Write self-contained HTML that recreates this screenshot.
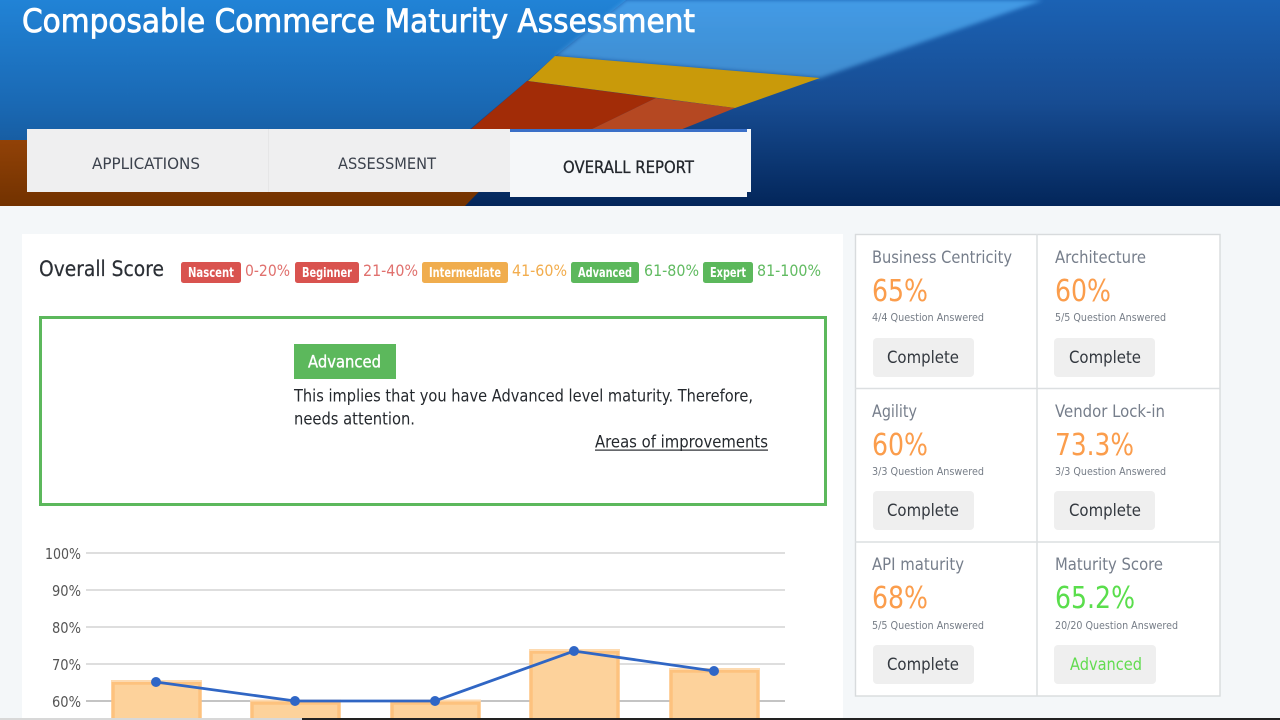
<!DOCTYPE html>
<html lang="en"><head><meta charset="utf-8"><title>Composable Commerce Maturity Assessment</title>
<style>
html,body{margin:0;padding:0;width:1280px;height:720px;overflow:hidden;background:#f4f7f9}
svg{display:block;filter:blur(.35px)}
text{font-family:"DejaVu Sans","Liberation Sans",sans-serif}
</style></head><body>
<svg xmlns="http://www.w3.org/2000/svg" width="1280" height="720" viewBox="0 0 1280 720">
<defs>
<linearGradient id="bgL" x1="0" y1="0" x2="0" y2="1"><stop offset="0" stop-color="#2183d6"/><stop offset=".5" stop-color="#1a69b4"/><stop offset="1" stop-color="#124a86"/></linearGradient>
<linearGradient id="bgR" x1="0" y1="0" x2="0" y2="1"><stop offset="0" stop-color="#1b62b4"/><stop offset=".5" stop-color="#174c92"/><stop offset="1" stop-color="#03265a"/></linearGradient>
<linearGradient id="lb" x1="0" y1="0" x2="0" y2="1"><stop offset="0" stop-color="#439be6"/><stop offset="1" stop-color="#3f8ccf"/></linearGradient>
<linearGradient id="br" x1="0" y1="0" x2="0" y2="1"><stop offset="0" stop-color="#964408"/><stop offset="1" stop-color="#723200"/></linearGradient>
<filter id="soft" x="-5%" y="-5%" width="110%" height="110%"><feGaussianBlur stdDeviation="2"/></filter>
</defs>
<rect width="1280" height="720" fill="#f4f7f9"/>
<rect x="0" y="0" width="1280" height="206" fill="url(#bgR)"/>
<polygon points="0,0 626,0 555,56 528,80 470,129 465,206 0,206" fill="url(#bgL)"/>
<polygon points="626,0 1043,0 820,78 555,56" fill="url(#lb)" filter="url(#soft)"/>
<polygon points="555,56 820,78 735,108 528,81" fill="#c99a0a"/>
<polygon points="527,81 656,98 590,130 470,130" fill="#a22c07"/>
<polygon points="656,98 735,108 680,130 590,130" fill="#b54822"/>
<polygon points="0,140 60,140 60,130 510,160 465,206 0,206" fill="url(#br)"/>
<text x="22" y="32" font-size="32" fill="#fff" stroke="#fff" stroke-width=".8" textLength="673" lengthAdjust="spacingAndGlyphs">Composable Commerce Maturity Assessment</text>

<rect x="27" y="129" width="483" height="63" fill="#efeff0"/>
<rect x="268" y="129" width="1" height="63" fill="#e6e6e7"/>
<rect x="510" y="129" width="241" height="63" fill="#f5f7f9"/>
<rect x="510" y="129" width="237" height="68" fill="#f5f7f9"/>
<rect x="510" y="129" width="237" height="3" fill="#3b70c8"/>
<text x="92" y="169" font-size="16" fill="#3c424d" textLength="108" lengthAdjust="spacingAndGlyphs">APPLICATIONS</text>
<text x="338" y="169" font-size="16" fill="#3c424d" textLength="98" lengthAdjust="spacingAndGlyphs">ASSESSMENT</text>
<text x="563" y="173" font-size="17" fill="#22262c" stroke="#22262c" stroke-width=".3" textLength="131" lengthAdjust="spacingAndGlyphs">OVERALL REPORT</text>

<rect x="22" y="234" width="821" height="486" fill="#fff"/>
<text x="39" y="276" font-size="21" fill="#2b2f35" stroke="#2b2f35" stroke-width=".2" textLength="125" lengthAdjust="spacingAndGlyphs">Overall Score</text>

<rect x="181" y="262" width="60" height="21" rx="2.5" fill="#d9534f"/>
<text x="188" y="277" font-size="13" font-weight="700" fill="#fff" textLength="46" lengthAdjust="spacingAndGlyphs">Nascent</text>
<text x="245" y="276" font-size="16" fill="#e0716e" textLength="45" lengthAdjust="spacingAndGlyphs">0-20%</text>
<rect x="295" y="262" width="64" height="21" rx="2.5" fill="#d9534f"/>
<text x="302" y="277" font-size="13" font-weight="700" fill="#fff" textLength="50" lengthAdjust="spacingAndGlyphs">Beginner</text>
<text x="363" y="276" font-size="16" fill="#e0716e" textLength="55" lengthAdjust="spacingAndGlyphs">21-40%</text>
<rect x="422" y="262" width="86" height="21" rx="2.5" fill="#f0ad4e"/>
<text x="429" y="277" font-size="13" font-weight="700" fill="#fff" textLength="72" lengthAdjust="spacingAndGlyphs">Intermediate</text>
<text x="512" y="276" font-size="16" fill="#f2ad4e" textLength="55" lengthAdjust="spacingAndGlyphs">41-60%</text>
<rect x="571" y="262" width="68" height="21" rx="2.5" fill="#5cb85c"/>
<text x="578" y="277" font-size="13" font-weight="700" fill="#fff" textLength="54" lengthAdjust="spacingAndGlyphs">Advanced</text>
<text x="644" y="276" font-size="16" fill="#62bb62" textLength="55" lengthAdjust="spacingAndGlyphs">61-80%</text>
<rect x="703" y="262" width="50" height="21" rx="2.5" fill="#5cb85c"/>
<text x="710" y="277" font-size="13" font-weight="700" fill="#fff" textLength="36" lengthAdjust="spacingAndGlyphs">Expert</text>
<text x="757" y="276" font-size="16" fill="#62bb62" textLength="64" lengthAdjust="spacingAndGlyphs">81-100%</text>

<rect x="40.5" y="317.5" width="785" height="187" fill="#fff" stroke="#5cb85c" stroke-width="3"/>
<rect x="294" y="344" width="102" height="35" fill="#5cb85c"/>
<text x="308" y="367.500" font-size="17" fill="#fff" stroke="#fff" stroke-width=".35" textLength="73" lengthAdjust="spacingAndGlyphs">Advanced</text>
<text x="294" y="401.500" font-size="16.500" fill="#24282d" textLength="459" lengthAdjust="spacingAndGlyphs">This implies that you have Advanced level maturity. Therefore,</text>
<text x="294" y="424.500" font-size="16.500" fill="#24282d" textLength="121" lengthAdjust="spacingAndGlyphs">needs attention.</text>
<text x="595" y="447.500" font-size="16.500" fill="#24282d" textLength="173" lengthAdjust="spacingAndGlyphs">Areas of improvements</text>
<rect x="595" y="449.500" width="173" height="1.200" fill="#24282d"/>

<g fill="none" stroke="#cbcbcb" stroke-width="1.2">
<path d="M86 553H785M86 590H785M86 627H785M86 664H785"/>
<path d="M86 701H785" stroke-width="2" stroke="#c4c4c4"/>
</g>
<g font-size="15.500" fill="#555">
<text x="45" y="559" textLength="36" lengthAdjust="spacingAndGlyphs">100%</text>
<text x="52" y="596" textLength="29" lengthAdjust="spacingAndGlyphs">90%</text>
<text x="52" y="633" textLength="29" lengthAdjust="spacingAndGlyphs">80%</text>
<text x="52" y="670" textLength="29" lengthAdjust="spacingAndGlyphs">70%</text>
<text x="52" y="707" textLength="29" lengthAdjust="spacingAndGlyphs">60%</text>
</g>
<g fill="#fdd29b" stroke="#fdc27e" stroke-width="3.500">
<rect x="113" y="683" width="87" height="50"/>
<rect x="252" y="703" width="87" height="40"/>
<rect x="392" y="703" width="87" height="40"/>
<rect x="531" y="652" width="87" height="90"/>
<rect x="671" y="671" width="87" height="70"/>
</g>
<g fill="#fddab0">
<rect x="111" y="680" width="91" height="2"/>
<rect x="250" y="699.500" width="91" height="2"/>
<rect x="390" y="699.500" width="91" height="2"/>
<rect x="529" y="649" width="91" height="2"/>
<rect x="669" y="668" width="91" height="2"/>
</g>
<polyline points="156,682 295,701 435,701 574,651 714,671" fill="none" stroke="#3066c4" stroke-width="2.800"/>
<g fill="#2f66c6">
<circle cx="156" cy="682" r="5"/><circle cx="295" cy="701" r="5"/><circle cx="435" cy="701" r="5"/><circle cx="574" cy="651" r="5"/><circle cx="714" cy="671" r="5"/>
</g>

<rect x="855.500" y="234.500" width="364.500" height="461.500" fill="#fff" stroke="#d8dbdd" stroke-width="1.400"/>
<path d="M1037 234V696M855 388.500H1220M855 542H1220" stroke="#dcdfe1" stroke-width="1.500" fill="none"/>

<g font-size="17" fill="#767e8b">
<text x="872" y="263" textLength="140" lengthAdjust="spacingAndGlyphs">Business Centricity</text>
<text x="1055" y="263" textLength="91" lengthAdjust="spacingAndGlyphs">Architecture</text>
<text x="872" y="417" textLength="45" lengthAdjust="spacingAndGlyphs">Agility</text>
<text x="1055" y="417" textLength="110" lengthAdjust="spacingAndGlyphs">Vendor Lock-in</text>
<text x="872" y="570" textLength="92" lengthAdjust="spacingAndGlyphs">API maturity</text>
<text x="1055" y="570" textLength="108" lengthAdjust="spacingAndGlyphs">Maturity Score</text>
</g>
<g font-size="30" fill="#fb9d4c">
<text x="872" y="301" textLength="56" lengthAdjust="spacingAndGlyphs">65%</text>
<text x="1055" y="301" textLength="56" lengthAdjust="spacingAndGlyphs">60%</text>
<text x="872" y="455" textLength="56" lengthAdjust="spacingAndGlyphs">60%</text>
<text x="1055" y="455" textLength="79" lengthAdjust="spacingAndGlyphs">73.3%</text>
<text x="872" y="608" textLength="56" lengthAdjust="spacingAndGlyphs">68%</text>
<text x="1055" y="608" textLength="80" lengthAdjust="spacingAndGlyphs" fill="#5ade4c">65.2%</text>
</g>
<g font-size="11" fill="#767d87">
<text x="872" y="321" textLength="112" lengthAdjust="spacingAndGlyphs">4/4 Question Answered</text>
<text x="1055" y="321" textLength="111" lengthAdjust="spacingAndGlyphs">5/5 Question Answered</text>
<text x="872" y="475" textLength="112" lengthAdjust="spacingAndGlyphs">3/3 Question Answered</text>
<text x="1055" y="475" textLength="111" lengthAdjust="spacingAndGlyphs">3/3 Question Answered</text>
<text x="872" y="629" textLength="112" lengthAdjust="spacingAndGlyphs">5/5 Question Answered</text>
<text x="1055" y="629" textLength="123" lengthAdjust="spacingAndGlyphs">20/20 Question Answered</text>
</g>
<g fill="#efefef">
<rect x="873" y="338" width="101" height="39" rx="4"/>
<rect x="1054" y="338" width="101" height="39" rx="4"/>
<rect x="873" y="491" width="101" height="39" rx="4"/>
<rect x="1054" y="491" width="101" height="39" rx="4"/>
<rect x="873" y="645" width="101" height="39" rx="4"/>
<rect x="1054" y="645" width="102" height="39" rx="4"/>
</g>
<g font-size="17" fill="#33383f">
<text x="887" y="363" textLength="72" lengthAdjust="spacingAndGlyphs">Complete</text>
<text x="1069" y="363" textLength="72" lengthAdjust="spacingAndGlyphs">Complete</text>
<text x="887" y="516" textLength="72" lengthAdjust="spacingAndGlyphs">Complete</text>
<text x="1069" y="516" textLength="72" lengthAdjust="spacingAndGlyphs">Complete</text>
<text x="887" y="670" textLength="72" lengthAdjust="spacingAndGlyphs">Complete</text>
<text x="1070" y="670" textLength="72" lengthAdjust="spacingAndGlyphs" fill="#62dc50">Advanced</text>
</g>

<rect x="0" y="718" width="302" height="2" fill="#d8d8d8"/>
<rect x="302" y="718" width="978" height="2" fill="#222"/>
</svg>
</body></html>
